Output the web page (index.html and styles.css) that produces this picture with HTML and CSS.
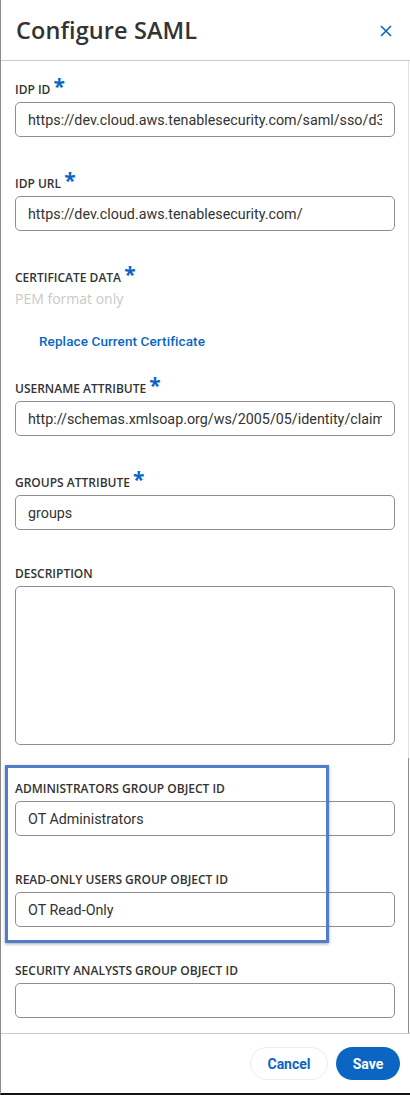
FILE: index.html
```html
<!DOCTYPE html>
<html lang="en">
<head>
  <meta charset="UTF-8">
  <meta name="viewport" content="width=device-width, initial-scale=1.0">
  <title>Configure SAML</title>
  <link rel="stylesheet" href="styles.css">
</head>
<body>
  <div class="panel">
    <header class="panel-header">
      <h1>Configure SAML</h1>
      <button class="close-btn" aria-label="Close">
        <svg width="12" height="12" viewBox="0 0 12 12">
          <path d="M1 1 L11 11 M11 1 L1 11" stroke="currentColor" stroke-width="1.6" fill="none" />
        </svg>
      </button>
    </header>

    <main class="panel-body">
      <div class="field">
        <label class="field-label required">IDP ID <span class="req">*</span></label>
        <input class="text-input" type="text" value="https://dev.cloud.aws.tenablesecurity.com/saml/sso/d3f1c2a7-90b4-4e51">
      </div>

      <div class="field">
        <label class="field-label required">IDP URL <span class="req">*</span></label>
        <input class="text-input" type="text" value="https://dev.cloud.aws.tenablesecurity.com/">
      </div>

      <div class="field field-cert">
        <label class="field-label required">Certificate Data <span class="req">*</span></label>
        <div class="field-hint">PEM format only</div>
        <a class="link-action" href="#">Replace Current Certificate</a>
      </div>

      <div class="field">
        <label class="field-label required">Username Attribute <span class="req">*</span></label>
        <input class="text-input" type="text" value="http://schemas.xmlsoap.org/ws/2005/05/identity/claims/name">
      </div>

      <div class="field">
        <label class="field-label required">Groups Attribute <span class="req">*</span></label>
        <input class="text-input" type="text" value="groups">
      </div>

      <div class="field">
        <label class="field-label">Description</label>
        <textarea class="text-area"></textarea>
      </div>

      <div class="field">
        <label class="field-label">Administrators Group Object ID</label>
        <input class="text-input" type="text" value="OT Administrators">
      </div>

      <div class="field">
        <label class="field-label">Read-Only Users Group Object ID</label>
        <input class="text-input" type="text" value="OT Read-Only">
      </div>

      <div class="field">
        <label class="field-label">Security Analysts Group Object ID</label>
        <input class="text-input" type="text" value="">
      </div>

      <div class="highlight-box"></div>
      <div class="scroll-track"><div class="scroll-thumb"></div></div>
    </main>

    <footer class="panel-footer">
      <button class="btn btn-secondary">Cancel</button>
      <button class="btn btn-primary">Save</button>
    </footer>
  </div>
</body>
</html>
```

FILE: styles.css
```css
:root {
  --primary-color: #0b66c3;
  --text-color: #333333;
  --text-muted: #c9c9c9;
  --border-color: #8e8e8e;
  --divider-color: #cccccc;
  --highlight-color: #4f7dcc;
}

* {
  margin: 0;
  padding: 0;
  box-sizing: border-box;
}

body {
  font-family: "Open Sans", "Liberation Sans", sans-serif;
  color: var(--text-color);
  background-color: #ffffff;
}

/* Panel */
.panel {
  width: 410px;
  height: 1095px;
  border-left: 1px solid #8a8a8a;
  border-bottom: 2px solid #111111;
  display: flex;
  flex-direction: column;
}

.panel-header {
  height: 61px;
  flex-shrink: 0;
  display: flex;
  align-items: center;
  justify-content: space-between;
  padding: 0 18px 0 15px;
  border-bottom: 1px solid var(--divider-color);
}

.panel-header h1 {
  font-size: 23.5px;
  font-weight: 600;
  color: var(--text-color);
  letter-spacing: 0.1px;
}

.close-btn {
  background: none;
  border: none;
  color: var(--primary-color);
  display: flex;
  padding: 0;
  margin-top: 1px;
  cursor: pointer;
}

.panel-body {
  flex: 1;
  position: relative;
  overflow: hidden;
  padding: 18px 15px 0 14px;
}

/* Fields */
.field {
  margin-bottom: 36px;
}

.field-cert {
  margin-bottom: 27px;
}

.field-label {
  display: block;
  font-size: 12px;
  font-weight: 600;
  line-height: 16px;
  text-transform: uppercase;
  margin-bottom: 4px;
  white-space: nowrap;
}

.field-label.required {
  padding-top: 3px;
}

.req {
  color: var(--primary-color);
  font-size: 21px;
  font-weight: 700;
  line-height: 16px;
  display: inline-block;
  vertical-align: top;
  height: 16px;
  margin-top: -4px;
}

.text-input,
.text-area {
  display: block;
  width: 100%;
  height: 35px;
  border: 1px solid var(--border-color);
  border-radius: 5px;
  padding: 0 12px;
  font-family: Roboto, "Liberation Sans", sans-serif;
  font-size: 14.3px;
  color: var(--text-color);
  background-color: #ffffff;
  outline: none;
}

.text-area {
  height: 159px;
  resize: none;
  padding: 8px 12px;
}

.field-hint {
  font-size: 14px;
  color: var(--text-muted);
  line-height: 18px;
}

.link-action {
  display: inline-block;
  margin: 25px 0 0 24px;
  font-family: Roboto, "Liberation Sans", sans-serif;
  font-size: 13.5px;
  font-weight: 500;
  line-height: 16px;
  color: var(--primary-color);
  text-decoration: none;
  letter-spacing: 0.1px;
}

/* Annotation overlay */
.highlight-box {
  position: absolute;
  left: 4px;
  top: 704px;
  width: 324px;
  height: 178px;
  border: 3px solid var(--highlight-color);
  box-shadow: 0 1px 3px rgba(0, 0, 0, 0.35);
  pointer-events: none;
}

.scroll-track {
  position: absolute;
  top: 0;
  right: 1px;
  width: 1px;
  height: 100%;
  background-color: #e3e3e3;
}

.scroll-thumb {
  position: absolute;
  left: 0;
  bottom: 0;
  width: 1px;
  height: 275px;
  background-color: #8c8c8c;
}

/* Footer */
.panel-footer {
  height: 60px;
  flex-shrink: 0;
  display: flex;
  align-items: center;
  justify-content: flex-end;
  gap: 8px;
  padding: 0 10px 0 0;
  border-top: 1px solid var(--divider-color);
}

.btn {
  height: 33px;
  border-radius: 17px;
  font-family: Roboto, "Liberation Sans", sans-serif;
  font-size: 14px;
  font-weight: 700;
  cursor: pointer;
  display: inline-flex;
  align-items: center;
  justify-content: center;
}

.btn-secondary {
  width: 78px;
  background-color: #ffffff;
  color: var(--primary-color);
  border: 1px solid #ececec;
}

.btn-primary {
  width: 64px;
  background-color: var(--primary-color);
  color: #ffffff;
  border: none;
}
```
